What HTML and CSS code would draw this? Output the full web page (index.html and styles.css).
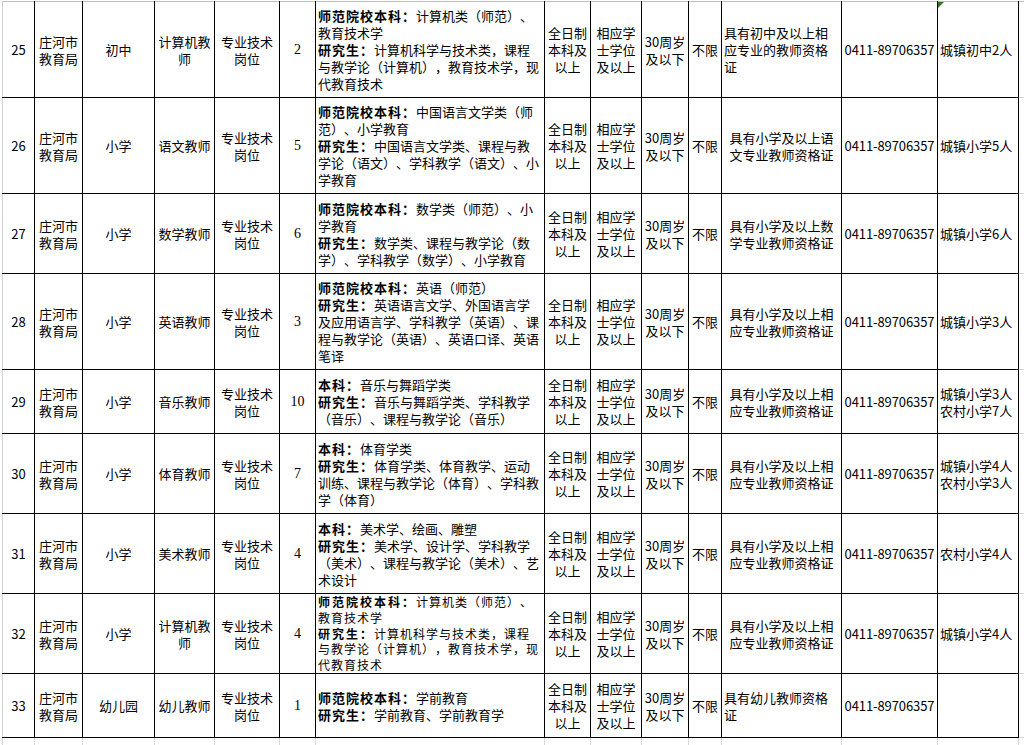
FILE: index.html
```html
<!DOCTYPE html>
<html lang="zh-CN">
<head>
<meta charset="utf-8">
<title>教师招聘岗位表</title>
<link rel="stylesheet" href="styles.css">
</head>
<body>
<table class="sheet">
  <colgroup>
    <col class="w1"><col class="w2"><col class="w3"><col class="w4"><col class="w5"><col class="w6"><col class="w7"><col class="w8"><col class="w9"><col class="w10"><col class="w11"><col class="w12"><col class="w13"><col class="w14"><col class="w15">
  </colgroup>
  <tbody>
    <tr class="r96">
      <td class="c">25</td>
      <td class="c">庄河市<br>教育局</td>
      <td class="c">初中</td>
      <td class="c">计算机教<br>师</td>
      <td class="c">专业技术<br>岗位</td>
      <td class="c num">2</td>
      <td class="l"><b>师范院校本科：</b>计算机类（师范）、<br>教育技术学<br><b>研究生：</b>计算机科学与技术类，课程<br>与教学论（计算机），教育技术学，现<br>代教育技术</td>
      <td class="c">全日制<br>本科及<br>以上</td>
      <td class="c">相应学<br>士学位<br>及以上</td>
      <td class="c">30周岁<br>及以下</td>
      <td class="c">不限</td>
      <td class="l">具有初中及以上相<br>应专业的教师资格<br>证</td>
      <td class="c tel">0411-89706357</td>
      <td class="l q tri">城镇初中2人</td>
      <td class="x"></td>
    </tr>
    <tr class="r96">
      <td class="c sel">26</td>
      <td class="c">庄河市<br>教育局</td>
      <td class="c">小学</td>
      <td class="c">语文教师</td>
      <td class="c">专业技术<br>岗位</td>
      <td class="c num">5</td>
      <td class="l"><b>师范院校本科：</b>中国语言文学类（师<br>范）、小学教育<br><b>研究生：</b>中国语言文学类、课程与教<br>学论（语文）、学科教学（语文）、小<br>学教育</td>
      <td class="c">全日制<br>本科及<br>以上</td>
      <td class="c">相应学<br>士学位<br>及以上</td>
      <td class="c">30周岁<br>及以下</td>
      <td class="c">不限</td>
      <td class="c">具有小学及以上语<br>文专业教师资格证</td>
      <td class="c tel">0411-89706357</td>
      <td class="l q">城镇小学5人</td>
      <td class="x"></td>
    </tr>
    <tr class="r80">
      <td class="c">27</td>
      <td class="c">庄河市<br>教育局</td>
      <td class="c">小学</td>
      <td class="c">数学教师</td>
      <td class="c">专业技术<br>岗位</td>
      <td class="c num">6</td>
      <td class="l"><b>师范院校本科：</b>数学类（师范）、小<br>学教育<br><b>研究生：</b>数学类、课程与教学论（数<br>学）、学科教学（数学）、小学教育</td>
      <td class="c">全日制<br>本科及<br>以上</td>
      <td class="c">相应学<br>士学位<br>及以上</td>
      <td class="c">30周岁<br>及以下</td>
      <td class="c">不限</td>
      <td class="c">具有小学及以上数<br>学专业教师资格证</td>
      <td class="c tel">0411-89706357</td>
      <td class="l q">城镇小学6人</td>
      <td class="x"></td>
    </tr>
    <tr class="r96">
      <td class="c">28</td>
      <td class="c">庄河市<br>教育局</td>
      <td class="c">小学</td>
      <td class="c">英语教师</td>
      <td class="c">专业技术<br>岗位</td>
      <td class="c num">3</td>
      <td class="l"><b>师范院校本科：</b>英语（师范）<br><b>研究生：</b>英语语言文学、外国语言学<br>及应用语言学、学科教学（英语）、课<br>程与教学论（英语）、英语口译、英语<br>笔译</td>
      <td class="c">全日制<br>本科及<br>以上</td>
      <td class="c">相应学<br>士学位<br>及以上</td>
      <td class="c">30周岁<br>及以下</td>
      <td class="c">不限</td>
      <td class="c">具有小学及以上相<br>应专业教师资格证</td>
      <td class="c tel">0411-89706357</td>
      <td class="l q">城镇小学3人</td>
      <td class="x"></td>
    </tr>
    <tr class="r64">
      <td class="c">29</td>
      <td class="c">庄河市<br>教育局</td>
      <td class="c">小学</td>
      <td class="c">音乐教师</td>
      <td class="c">专业技术<br>岗位</td>
      <td class="c num">10</td>
      <td class="l"><b>本科：</b>音乐与舞蹈学类<br><b>研究生：</b>音乐与舞蹈学类、学科教学<br>（音乐）、课程与教学论（音乐）</td>
      <td class="c">全日制<br>本科及<br>以上</td>
      <td class="c">相应学<br>士学位<br>及以上</td>
      <td class="c">30周岁<br>及以下</td>
      <td class="c">不限</td>
      <td class="c">具有小学及以上相<br>应专业教师资格证</td>
      <td class="c tel">0411-89706357</td>
      <td class="l q">城镇小学3人<br>农村小学7人</td>
      <td class="x"></td>
    </tr>
    <tr class="r80">
      <td class="c">30</td>
      <td class="c">庄河市<br>教育局</td>
      <td class="c">小学</td>
      <td class="c">体育教师</td>
      <td class="c">专业技术<br>岗位</td>
      <td class="c num">7</td>
      <td class="l"><b>本科：</b>体育学类<br><b>研究生：</b>体育学类、体育教学、运动<br>训练、课程与教学论（体育）、学科教<br>学（体育）</td>
      <td class="c">全日制<br>本科及<br>以上</td>
      <td class="c">相应学<br>士学位<br>及以上</td>
      <td class="c">30周岁<br>及以下</td>
      <td class="c">不限</td>
      <td class="c">具有小学及以上相<br>应专业教师资格证</td>
      <td class="c tel">0411-89706357</td>
      <td class="l q">城镇小学4人<br>农村小学3人</td>
      <td class="x"></td>
    </tr>
    <tr class="r80">
      <td class="c">31</td>
      <td class="c">庄河市<br>教育局</td>
      <td class="c">小学</td>
      <td class="c">美术教师</td>
      <td class="c">专业技术<br>岗位</td>
      <td class="c num">4</td>
      <td class="l"><b>本科：</b>美术学、绘画、雕塑<br><b>研究生：</b>美术学、设计学、学科教学<br>（美术）、课程与教学论（美术）、艺<br>术设计</td>
      <td class="c">全日制<br>本科及<br>以上</td>
      <td class="c">相应学<br>士学位<br>及以上</td>
      <td class="c">30周岁<br>及以下</td>
      <td class="c">不限</td>
      <td class="c">具有小学及以上相<br>应专业教师资格证</td>
      <td class="c tel">0411-89706357</td>
      <td class="l q">农村小学4人</td>
      <td class="x"></td>
    </tr>
    <tr class="r80">
      <td class="c">32</td>
      <td class="c">庄河市<br>教育局</td>
      <td class="c">小学</td>
      <td class="c">计算机教<br>师</td>
      <td class="c">专业技术<br>岗位</td>
      <td class="c num">4</td>
      <td class="l tight"><b>师范院校本科：</b>计算机类（师范）、<br>教育技术学<br><b>研究生：</b>计算机科学与技术类，课程<br>与教学论（计算机），教育技术学，现<br>代教育技术</td>
      <td class="c">全日制<br>本科及<br>以上</td>
      <td class="c">相应学<br>士学位<br>及以上</td>
      <td class="c">30周岁<br>及以下</td>
      <td class="c">不限</td>
      <td class="c">具有小学及以上相<br>应专业教师资格证</td>
      <td class="c tel">0411-89706357</td>
      <td class="l q">城镇小学4人</td>
      <td class="x"></td>
    </tr>
    <tr class="r64">
      <td class="c">33</td>
      <td class="c">庄河市<br>教育局</td>
      <td class="c">幼儿园</td>
      <td class="c">幼儿教师</td>
      <td class="c">专业技术<br>岗位</td>
      <td class="c num">1</td>
      <td class="l"><b>师范院校本科：</b>学前教育<br><b>研究生：</b>学前教育、学前教育学</td>
      <td class="c">全日制<br>本科及<br>以上</td>
      <td class="c">相应学<br>士学位<br>及以上</td>
      <td class="c">30周岁<br>及以下</td>
      <td class="c">不限</td>
      <td class="l">具有幼儿教师资格<br>证</td>
      <td class="c tel">0411-89706357</td>
      <td class="l q"></td>
      <td class="x"></td>
    </tr>
    <tr class="grid">
      <td></td><td></td><td></td><td></td><td></td><td></td><td></td><td></td><td></td><td></td><td></td><td></td><td></td><td></td><td class="x"></td>
    </tr>
  </tbody>
</table>
</body>
</html>
```
FILE: styles.css
```css
html, body {
  margin: 0;
  padding: 0;
  background: #fff;
  overflow: hidden;
}

body {
  font-family: "Noto Sans CJK SC", "Noto Sans", sans-serif;
  font-size: 13px;
  color: #000;
  text-spacing-trim: space-all;
}

.sheet {
  border-collapse: collapse;
  table-layout: fixed;
  width: 1046px;
  margin: 1px 0 0 2px;
}

.w1 { width: 32px; }
.w2 { width: 48px; }
.w3 { width: 72px; }
.w4 { width: 60px; }
.w5 { width: 65px; }
.w6 { width: 36px; }
.w7 { width: 229px; }
.w8 { width: 46px; }
.w9 { width: 51px; }
.w10 { width: 47px; }
.w11 { width: 33px; }
.w12 { width: 120px; }
.w13 { width: 96px; }
.w14 { width: 81px; }
.w15 { width: 30px; }

.sheet td {
  border: 1px solid #000;
  padding: 0 2px;
  line-height: 17px;
  vertical-align: middle;
  white-space: nowrap;
  overflow: hidden;
}

.sheet td.tight {
  font-size: 12px;
  letter-spacing: 1px;
  line-height: 15.8px;
}

.sheet tr:first-child td {
  border-top: 1px solid #bdbdbd;
}

.sheet td:first-child {
  border-left: 1px solid #d0d0d0;
}

.r96 { height: 96px; }
.r80 { height: 80px; }
.r64 { height: 64px; }
.grid { height: 24px; }

.grid td {
  border-color: #d6d6d6;
}

.sheet td.x {
  border-top-color: #d6d6d6;
  border-bottom-color: #d6d6d6;
  border-right-color: #d6d6d6;
}

.c { text-align: center; }
.l { text-align: left; }
.q { padding-left: 4px; }

.sheet b {
  font-weight: 700;
  letter-spacing: 1px;
}

.sheet td.tight b {
  letter-spacing: 2px;
}

.num {
  font-family: "Liberation Serif", serif;
  font-size: 14px;
}

.tel {
  letter-spacing: -0.1px;
}

.sel, .tri {
  position: relative;
}

.sel::before {
  content: "";
  position: absolute;
  left: -3px;
  top: 0;
  bottom: 0;
  width: 2px;
  background: #6cbf5c;
}

.tri::before {
  content: "";
  position: absolute;
  left: 0;
  top: 0;
  width: 0;
  height: 0;
  border-top: 6px solid #2d7a1f;
  border-right: 6px solid transparent;
}
```
